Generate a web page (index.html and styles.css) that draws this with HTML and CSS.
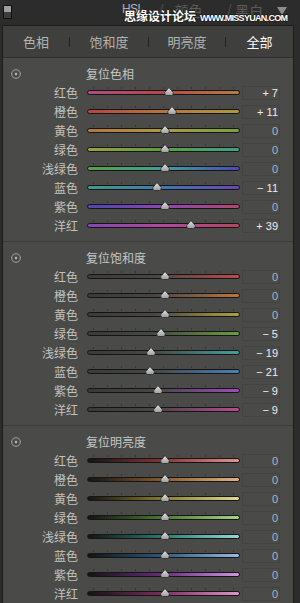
FILE: index.html
```html
<!DOCTYPE html>
<html lang="zh">
<head>
<meta charset="utf-8">
<title>HSL</title>
<link rel="stylesheet" href="styles.css">
</head>
<body>
<svg class="defs" width="0" height="0">
  <defs>
    <linearGradient id="tg" x1="0" y1="0" x2="0" y2="1">
      <stop offset="0" stop-color="#e4e4e4"/>
      <stop offset="1" stop-color="#9c9c9c"/>
    </linearGradient>
    <symbol id="thumb" viewBox="0 0 10 9">
      <path d="M5 0.5 L9.3 5.6 Q9.6 8.5 7.4 8.5 H2.6 Q0.4 8.5 0.7 5.6 Z" fill="url(#tg)" stroke="#262626" stroke-width="0.8"/>
    </symbol>
    <symbol id="reset" viewBox="0 0 10 10">
      <circle cx="5" cy="5" r="4.5" fill="#5f5f5d" stroke="#939391" stroke-width="1"/>
      <circle cx="5" cy="5" r="2.4" fill="none" stroke="#3a3a38" stroke-width="1"/>
      <circle cx="5" cy="5" r="1.2" fill="#b4b4b4"/>
    </symbol>
  </defs>
</svg>
<div class="app">
  <header class="topbar">
    <span class="toggle"></span>
    <nav class="modes">
      <span class="hsl">HSL</span>
      <span class="slash s1">/</span>
      <span class="dim d1">颜色</span>
      <span class="slash s2">/</span>
      <span class="dim d2">黑白</span>
      <svg class="caret" width="10" height="8" viewBox="0 0 10 8"><polygon points="0,0 10,0 5,8" fill="#8c8c8c"/></svg>
    </nav>
    <div class="wm"><span class="wm-cn">思缘设计论坛</span><span class="wm-en">WWW.MISSYUAN.COM</span></div>
  </header>
  <div class="frame">
    <div class="tabs">
      <span class="tab t1">色相</span><i class="sep"></i>
      <span class="tab t2">饱和度</span><i class="sep"></i>
      <span class="tab t3">明亮度</span><i class="sep"></i>
      <span class="tab t4 active">全部</span>
    </div>

    <section class="group s-hue">
      <div class="ghead"><svg class="reset"><use href="#reset"/></svg><span class="gtitle">复位色相</span></div>
      <div class="row red"><span class="label">红色</span><div class="slider"><i class="ticks"></i><i class="track"></i><svg class="thumb" style="--v:7"><use href="#thumb"/></svg></div><span class="val">+ 7</span></div>
      <div class="row orange"><span class="label">橙色</span><div class="slider"><i class="ticks"></i><i class="track"></i><svg class="thumb" style="--v:11"><use href="#thumb"/></svg></div><span class="val">+ 11</span></div>
      <div class="row yellow"><span class="label">黄色</span><div class="slider"><i class="ticks"></i><i class="track"></i><svg class="thumb" style="--v:0"><use href="#thumb"/></svg></div><span class="val zero">0</span></div>
      <div class="row green"><span class="label">绿色</span><div class="slider"><i class="ticks"></i><i class="track"></i><svg class="thumb" style="--v:0"><use href="#thumb"/></svg></div><span class="val zero">0</span></div>
      <div class="row aqua"><span class="label">浅绿色</span><div class="slider"><i class="ticks"></i><i class="track"></i><svg class="thumb" style="--v:0"><use href="#thumb"/></svg></div><span class="val zero">0</span></div>
      <div class="row blue"><span class="label">蓝色</span><div class="slider"><i class="ticks"></i><i class="track"></i><svg class="thumb" style="--v:-11"><use href="#thumb"/></svg></div><span class="val">− 11</span></div>
      <div class="row purple"><span class="label">紫色</span><div class="slider"><i class="ticks"></i><i class="track"></i><svg class="thumb" style="--v:0"><use href="#thumb"/></svg></div><span class="val zero">0</span></div>
      <div class="row magenta"><span class="label">洋红</span><div class="slider"><i class="ticks"></i><i class="track"></i><svg class="thumb" style="--v:39"><use href="#thumb"/></svg></div><span class="val">+ 39</span></div>
    </section>

    <section class="group s-sat">
      <div class="ghead"><svg class="reset"><use href="#reset"/></svg><span class="gtitle">复位饱和度</span></div>
      <div class="row red"><span class="label">红色</span><div class="slider"><i class="ticks"></i><i class="track"></i><svg class="thumb" style="--v:0"><use href="#thumb"/></svg></div><span class="val zero">0</span></div>
      <div class="row orange"><span class="label">橙色</span><div class="slider"><i class="ticks"></i><i class="track"></i><svg class="thumb" style="--v:0"><use href="#thumb"/></svg></div><span class="val zero">0</span></div>
      <div class="row yellow"><span class="label">黄色</span><div class="slider"><i class="ticks"></i><i class="track"></i><svg class="thumb" style="--v:0"><use href="#thumb"/></svg></div><span class="val zero">0</span></div>
      <div class="row green"><span class="label">绿色</span><div class="slider"><i class="ticks"></i><i class="track"></i><svg class="thumb" style="--v:-5"><use href="#thumb"/></svg></div><span class="val">− 5</span></div>
      <div class="row aqua"><span class="label">浅绿色</span><div class="slider"><i class="ticks"></i><i class="track"></i><svg class="thumb" style="--v:-19"><use href="#thumb"/></svg></div><span class="val">− 19</span></div>
      <div class="row blue"><span class="label">蓝色</span><div class="slider"><i class="ticks"></i><i class="track"></i><svg class="thumb" style="--v:-21"><use href="#thumb"/></svg></div><span class="val">− 21</span></div>
      <div class="row purple"><span class="label">紫色</span><div class="slider"><i class="ticks"></i><i class="track"></i><svg class="thumb" style="--v:-9"><use href="#thumb"/></svg></div><span class="val">− 9</span></div>
      <div class="row magenta"><span class="label">洋红</span><div class="slider"><i class="ticks"></i><i class="track"></i><svg class="thumb" style="--v:-9"><use href="#thumb"/></svg></div><span class="val">− 9</span></div>
    </section>

    <section class="group s-lum">
      <div class="ghead"><svg class="reset"><use href="#reset"/></svg><span class="gtitle">复位明亮度</span></div>
      <div class="row red"><span class="label">红色</span><div class="slider"><i class="ticks"></i><i class="track"></i><svg class="thumb" style="--v:0"><use href="#thumb"/></svg></div><span class="val zero">0</span></div>
      <div class="row orange"><span class="label">橙色</span><div class="slider"><i class="ticks"></i><i class="track"></i><svg class="thumb" style="--v:0"><use href="#thumb"/></svg></div><span class="val zero">0</span></div>
      <div class="row yellow"><span class="label">黄色</span><div class="slider"><i class="ticks"></i><i class="track"></i><svg class="thumb" style="--v:0"><use href="#thumb"/></svg></div><span class="val zero">0</span></div>
      <div class="row green"><span class="label">绿色</span><div class="slider"><i class="ticks"></i><i class="track"></i><svg class="thumb" style="--v:0"><use href="#thumb"/></svg></div><span class="val zero">0</span></div>
      <div class="row aqua"><span class="label">浅绿色</span><div class="slider"><i class="ticks"></i><i class="track"></i><svg class="thumb" style="--v:0"><use href="#thumb"/></svg></div><span class="val zero">0</span></div>
      <div class="row blue"><span class="label">蓝色</span><div class="slider"><i class="ticks"></i><i class="track"></i><svg class="thumb" style="--v:0"><use href="#thumb"/></svg></div><span class="val zero">0</span></div>
      <div class="row purple"><span class="label">紫色</span><div class="slider"><i class="ticks"></i><i class="track"></i><svg class="thumb" style="--v:0"><use href="#thumb"/></svg></div><span class="val zero">0</span></div>
      <div class="row magenta"><span class="label">洋红</span><div class="slider"><i class="ticks"></i><i class="track"></i><svg class="thumb" style="--v:0"><use href="#thumb"/></svg></div><span class="val zero">0</span></div>
    </section>
  </div>
</div>
</body>
</html>
```

FILE: styles.css
```css
html, body {
  margin: 0;
  padding: 0;
}
body {
  width: 300px;
  height: 603px;
  overflow: hidden;
  background: #2c2c2c;
  font-family: "Noto Sans CJK SC", sans-serif;
}
.defs {
  position: absolute;
  width: 0;
  height: 0;
}
.app {
  display: flex;
  flex-direction: column;
}

/* ---------- top bar ---------- */
.topbar {
  position: relative;
  height: 25px;
  display: flex;
  align-items: flex-start;
}
.toggle {
  margin: 5px 0 0 3px;
  width: 7px;
  height: 12px;
  border: 1px solid #111;
  background: linear-gradient(#9e9e9e 0 50%, #3c3c3c 50%);
}
.modes {
  display: flex;
  align-items: flex-start;
  margin-left: 110px;
  padding-top: 1px;
  line-height: 18px;
}
.hsl {
  font: 12px/16px "Liberation Sans", sans-serif;
  letter-spacing: -0.6px;
  color: #aab4c0;
}
.slash {
  font: 14px/18px "Liberation Sans", sans-serif;
  color: #4e4e4e;
}
.s1 { margin-left: 16px; }
.s2 { margin-left: 25px; }
.dim {
  font-size: 14px;
  line-height: 18px;
  color: #5a5a5a;
}
.d1 { margin-left: 11px; }
.d2 { margin-left: 4px; }
.caret {
  margin: 6px 0 0 14px;
}
.wm {
  position: absolute;
  left: 124px;
  top: 7px;
  display: flex;
  align-items: baseline;
  gap: 4px;
  color: #fff;
  font-weight: bold;
  text-shadow: 1px 0 #1e1e1e, -1px 0 #1e1e1e, 0 1px #1e1e1e, 0 -1px #1e1e1e;
}
.wm-cn {
  font-size: 12px;
  line-height: 17px;
}
.wm-en {
  font: bold 9px "Liberation Sans", sans-serif;
  letter-spacing: -0.7px;
}

/* ---------- frame ---------- */
.frame {
  margin-left: 2px;
  width: 290px;
  border-left: 1px solid #1c1c1c;
  border-right: 1px solid #1c1c1c;
  background: #4a4b48;
}
.tabs {
  display: flex;
  align-items: center;
  height: 31px;
  border-top: 1px solid #1c1c1c;
  border-bottom: 1px solid #2e2e2d;
  background: #3f403d;
}
.tab {
  text-align: center;
  font-size: 13px;
  color: #b2b2b2;
}
.tab.active { color: #fafafa; }
.t1 { width: 66px; }
.t2 { width: 78px; }
.t3 { width: 76px; }
.t4 { width: 67px; }
.sep {
  width: 1px;
  height: 10px;
  background: #232323;
}

/* ---------- groups ---------- */
.group {
  padding: 6px 0;
  border-bottom: 1px solid #3c3c3a;
}
.group:last-child { border-bottom: none; }
.ghead {
  display: flex;
  align-items: center;
  height: 19px;
}
.reset {
  margin-left: 8px;
  width: 10px;
  height: 10px;
}
.gtitle {
  margin-left: 65px;
  font-size: 12px;
  color: #c6c6c6;
}
.row {
  display: flex;
  align-items: center;
  height: 19px;
}
.label {
  width: 75px;
  padding-right: 1px;
  text-align: right;
  font-size: 12px;
  color: #c2c2c2;
}
.slider {
  position: relative;
  box-sizing: border-box;
  margin-left: 8px;
  width: 153px;
  height: 19px;
  padding-top: 4px;
  display: flex;
  flex-direction: column;
}
.ticks {
  display: block;
  margin-left: 6px;
  width: 141px;
  height: 2px;
  background: repeating-linear-gradient(to right, #363634 0 1px, transparent 1px 14px);
}
.track {
  display: block;
  margin-top: 1px;
  height: 5px;
  box-sizing: border-box;
  border: 1px solid #151515;
  border-radius: 3px;
}
.thumb {
  position: absolute;
  top: 4px;
  left: calc(50% + 1px + var(--v) * 0.69px);
  width: 10px;
  height: 9px;
  transform: translateX(-50%);
}
.val {
  box-sizing: border-box;
  margin-left: 2px;
  width: 38px;
  height: 14px;
  border: 1px solid #434441;
  padding-right: 1px;
  text-align: right;
  font: 11px/12px "Liberation Sans", sans-serif;
  color: #ececec;
}
.val.zero { color: #a3b5cb; }

/* ---------- hue tracks ---------- */
.s-hue .red .track     { background: linear-gradient(to right, #b04a86, #b84848 50%, #b47c40); }
.s-hue .orange .track  { background: linear-gradient(to right, #b44646, #b87440 50%, #ac9a40); }
.s-hue .yellow .track  { background: linear-gradient(to right, #b47640, #ac9a3e 50%, #78a242); }
.s-hue .green .track   { background: linear-gradient(to right, #a09e3e, #56a040 50%, #40a08c); }
.s-hue .aqua .track    { background: linear-gradient(to right, #58a042, #40a09a 50%, #4a4cb4); }
.s-hue .blue .track    { background: linear-gradient(to right, #409c84, #4078b4 50%, #6646b4); }
.s-hue .purple .track  { background: linear-gradient(to right, #4c46b4, #8c46b4 50%, #b4466e); }
.s-hue .magenta .track { background: linear-gradient(to right, #8446b4, #b4469e 50%, #b4465e); }

/* ---------- saturation tracks ---------- */
.s-sat .red .track     { background: linear-gradient(to right, #3a3a38, #4a4644 45%, #bc4a4a); }
.s-sat .orange .track  { background: linear-gradient(to right, #3a3a38, #4a4644 45%, #bc763a); }
.s-sat .yellow .track  { background: linear-gradient(to right, #3a3a38, #4a4844 45%, #b0a03e); }
.s-sat .green .track   { background: linear-gradient(to right, #3a3a38, #464a44 45%, #66a03e); }
.s-sat .aqua .track    { background: linear-gradient(to right, #3a3a38, #444a48 45%, #44a09a); }
.s-sat .blue .track    { background: linear-gradient(to right, #3a3a38, #44484a 45%, #4a7eb8); }
.s-sat .purple .track  { background: linear-gradient(to right, #3a3a38, #48444a 45%, #9c4cb8); }
.s-sat .magenta .track { background: linear-gradient(to right, #3a3a38, #4a4448 45%, #b84a90); }

/* ---------- luminance tracks ---------- */
.s-lum .red .track     { background: linear-gradient(to right, #141414, #8a3434 50%, #e09494); }
.s-lum .orange .track  { background: linear-gradient(to right, #141414, #8a5a2c 50%, #e0b488); }
.s-lum .yellow .track  { background: linear-gradient(to right, #141414, #8a7e2c 50%, #e0d894); }
.s-lum .green .track   { background: linear-gradient(to right, #141414, #4a7a2c 50%, #a4d488); }
.s-lum .aqua .track    { background: linear-gradient(to right, #141414, #2c7a74 50%, #94d8d4); }
.s-lum .blue .track    { background: linear-gradient(to right, #141414, #2c5a80 50%, #94bce0); }
.s-lum .purple .track  { background: linear-gradient(to right, #141414, #6a2c80 50%, #d094e0); }
.s-lum .magenta .track { background: linear-gradient(to right, #141414, #802c60 50%, #e094c8); }
```
